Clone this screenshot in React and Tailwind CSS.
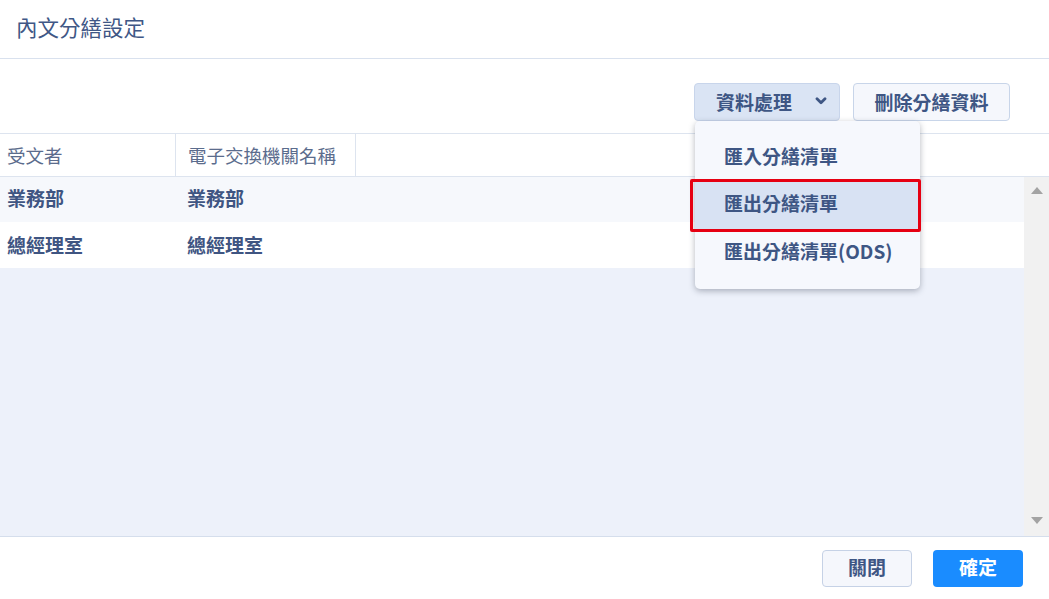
import React from "react";

const font = { fontFamily: '"Noto Sans CJK TC", "Noto Sans", sans-serif' };

function Chevron() {
  return (
    <svg width="12" height="8" viewBox="0 0 12 8" className="ml-[23px]">
      <path d="M2 1.8 L6 5.8 L10 1.8" fill="none" stroke="#3e5684" strokeWidth="2.8" strokeLinecap="round" strokeLinejoin="round" />
    </svg>
  );
}

function Tri({ up }) {
  return (
    <svg width="12" height="7" viewBox="0 0 12 7">
      {up ? <path d="M0 7 L6 0 L12 7 Z" fill="#a3a3a3" /> : <path d="M0 0 L6 7 L12 0 Z" fill="#a3a3a3" />}
    </svg>
  );
}

export default function App() {
  return (
    <div className="w-[1049px] h-[599px] bg-white flex flex-col overflow-hidden text-[#3e5684]" style={font}>
      <div className="h-[59px] shrink-0 border-b border-[#d9e1ee] flex items-center pl-[16px] pb-[5px]">
        <span className="text-[21.5px] leading-none text-[#3f5786]">內文分繕設定</span>
      </div>
      <div className="h-[75px] shrink-0 border-b border-[#dde4ef] flex justify-end items-start pt-[24px] pr-[39px] gap-[13px]">
        <div className="relative">
          <button className="h-[38px] w-[146px] rounded-[4px] border border-[#c8d5eb] bg-[#dae4f4] flex items-center justify-start pl-[21px] pb-[2px] text-[19px] font-bold text-[#3e5684] leading-none">
            資料處理
            <Chevron />
          </button>
          <div className="absolute left-[1px] top-[38px] w-[225px] h-[168px] rounded-[5px] bg-[#f6f8fd] shadow-[0_2px_6px_rgba(40,50,70,0.35)] pt-[14px] z-10">
            <div className="h-[47px] flex items-center pl-[29px] pb-[7px] text-[19px] font-bold leading-none">匯入分繕清單</div>
            <div className="relative h-[47px] flex items-center pl-[29px] pb-[6px] text-[19px] font-bold leading-none bg-[#d8e2f3]">
              匯出分繕清單
              <div className="absolute top-[-3px] bottom-[-3px] left-[-5px] right-[-1px] border-[3px] border-[#e60012] rounded-[2px]" />
            </div>
            <div className="h-[47px] flex items-center pl-[29px] pb-[4px] text-[19px] font-bold leading-none">匯出分繕清單(ODS)</div>
          </div>
        </div>
        <button className="h-[38px] w-[157px] rounded-[4px] border border-[#c8d5e9] bg-[#f5f7fc] flex items-center justify-center pb-[2px] text-[19px] font-bold text-[#3e5684] leading-none">
          刪除分繕資料
        </button>
      </div>
      <div className="h-[43px] shrink-0 border-b border-[#dde4ef] flex text-[18.5px] text-[#5b6c8d] leading-none">
        <div className="w-[176px] border-r border-[#dde4ef] flex items-center pl-[7px]">受文者</div>
        <div className="w-[180px] border-r border-[#dde4ef] flex items-center pl-[12px]">電子交換機關名稱</div>
      </div>
      <div className="flex-1 flex min-h-0 border-b border-[#d5deec]">
        <div className="flex-1 bg-[#edf1fa] flex flex-col">
          <div className="h-[45px] bg-[#f6f8fc] flex items-center pb-[4px] text-[19px] font-bold leading-none text-[#3f5582]">
            <div className="w-[176px] pl-[7px]">業務部</div>
            <div className="pl-[11px]">業務部</div>
          </div>
          <div className="h-[46px] bg-white flex items-center pb-[2px] text-[19px] font-bold leading-none text-[#3f5582]">
            <div className="w-[176px] pl-[7px]">總經理室</div>
            <div className="pl-[11px]">總經理室</div>
          </div>
        </div>
        <div className="w-[25px] bg-[#f1f1f1] flex flex-col justify-between items-center pt-[10px] pb-[12px]">
          <Tri up />
          <Tri />
        </div>
      </div>
      <div className="flex-1 max-h-[62px] min-h-[62px] flex justify-end items-start pt-[13px] pr-[26px] gap-[21px]">
        <button className="h-[37px] w-[90px] rounded-[4px] border border-[#c6d2e6] bg-[#f5f7fc] pb-[5px] text-[19px] font-bold text-[#3e5684] leading-none">關閉</button>
        <button className="h-[37px] w-[90px] rounded-[4px] bg-[#1a8cff] pb-[5px] text-[19px] font-bold text-white leading-none">確定</button>
      </div>
    </div>
  );
}
